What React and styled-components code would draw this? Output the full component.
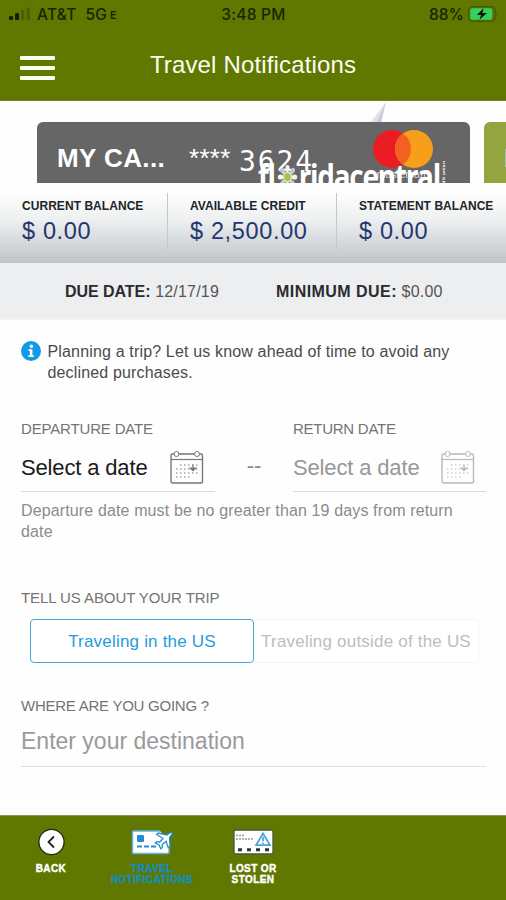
import React from "react";
import styled, { createGlobalStyle } from "styled-components";

const GlobalStyle = createGlobalStyle`
  * { box-sizing: border-box; }
  body { margin: 0; background: #fff; font-family: "Liberation Sans", Arial, sans-serif; }
`;

const Screen = styled.div`
  width: 506px;
  height: 900px;
  display: flex;
  flex-direction: column;
  background: #fefefe;
  overflow: hidden;
`;

const TopBar = styled.header`
  height: 101px;
  flex: none;
  background: #607800;
  border-bottom: 1px solid #6d8222;
`;

const StatusBar = styled.div`
  height: 28px;
  display: grid;
  grid-template-columns: 1fr auto 1fr;
  align-items: center;
  padding: 0 7px 0 8px;
  font-family: Inter, sans-serif;
  font-size: 15.5px;
  font-weight: 500;
  letter-spacing: 0.25px;
  color: #1b2302;
`;

const Carrier = styled.div`
  display: flex;
  align-items: center;
  white-space: pre;
  svg { margin-right: 6px; }
  small { font-size: 11px; font-weight: 600; margin: 2px 0 0 3px; }
`;

const Power = styled.div`
  display: flex;
  justify-content: flex-end;
  align-items: center;
  gap: 4px;
  letter-spacing: 0;
`;

const TitleRow = styled.div`
  height: 73px;
  display: grid;
  grid-template-columns: 35px 1fr 35px;
  align-items: center;
  padding: 0 20px;
`;

const MenuIcon = styled.div`
  display: grid;
  gap: 6.2px;
  margin-top: 7px;
  span { height: 3.6px; border-radius: 1px; background: #fbfdf0; }
`;

const Title = styled.h1`
  margin: 1px 0 0;
  font-size: 24px;
  font-weight: 400;
  letter-spacing: 0.15px;
  text-align: center;
  color: #fbfdf4;
`;

const CardStrip = styled.section`
  height: 82px;
  flex: none;
  position: relative;
  display: flex;
  align-items: flex-end;
  gap: 14px;
  padding-left: 37px;
  overflow: hidden;
`;

const Peak = styled.svg`
  position: absolute;
  left: 370px;
  top: 1px;
`;

const Card = styled.div`
  position: relative;
  flex: none;
  width: ${(p) => p.$width}px;
  height: 61px;
  padding: 21px 0 0 20px;
  display: flex;
  align-items: flex-start;
  border-radius: 6px 6px 0 0;
  background: ${(p) => p.$color};
  color: #fff;
  font-size: 26px;
  line-height: 30px;
  overflow: hidden;
`;

const CardName = styled.strong`
  width: 132px;
  letter-spacing: 0.4px;
`;

const CardMask = styled.span`
  width: 41px;
  letter-spacing: 0.3px;
`;

const CardNumber = styled.span`
  margin: 4px 0 0 9px;
  font-family: "DejaVu Sans Mono", monospace;
  font-size: 28px;
  letter-spacing: 1.9px;
`;

const NetworkMark = styled.div`
  position: absolute;
  left: 335px;
  top: 7px;
  width: 62px;
  text-align: center;
  font-size: 10.5px;
  line-height: 10px;
  color: #dcdcdc;
  svg { display: block; }
`;

const Brand = styled.div`
  position: absolute;
  left: 221px;
  top: 35px;
  display: flex;
  align-items: flex-start;
  font-family: "Open Sans", sans-serif;
  font-size: 34px;
  font-weight: 700;
  line-height: 38px;
  letter-spacing: -1.5px;
  transform: scaleX(0.82);
  transform-origin: left;
  svg { margin: 2px 1px 0 2px; }
`;

const BrandSide = styled.span`
  margin: 4px 0 0 2px;
  writing-mode: vertical-rl;
  transform: rotate(180deg);
  font-size: 5px;
  line-height: 5px;
  letter-spacing: 0;
`;

const Balances = styled.section`
  height: 80px;
  flex: none;
  display: grid;
  grid-template-columns: 168px 169px 1fr;
  padding-top: 10px;
  background: linear-gradient(#fdfdfd 12%, #eef0f1 45%, #bfc4c8 100%);
`;

const Balance = styled.div`
  height: 56px;
  padding: 5.5px 0 0 22px;
  white-space: nowrap;
  border-right: ${(p) => (p.$last ? "0" : "1px solid #c4c8cc")};
`;

const BalanceLabel = styled.div`
  font-size: 12px;
  font-weight: 700;
  line-height: 14px;
  letter-spacing: 0.05px;
  color: #222428;
`;

const Amount = styled.div`
  margin-top: 4px;
  font-size: 23.5px;
  line-height: 28px;
  letter-spacing: 0.65px;
  color: #22366f;
`;

const DueBar = styled.section`
  height: 57px;
  flex: none;
  display: flex;
  align-items: center;
  gap: 57px;
  padding: 2px 0 0 65px;
  background: #edeef0;
  border-bottom: 1px solid #f3f3f4;
  font-size: 16px;
  color: #555;
  white-space: nowrap;
`;

const Due = styled.span`
  letter-spacing: 0.2px;
  b {
    letter-spacing: ${(p) => p.$tracking}px;
    color: #2b2b2d;
  }
`;

const Form = styled.main`
  flex: 1;
  padding: 21px 20px 0 21px;
`;

const Notice = styled.div`
  display: flex;
  gap: 6.5px;
  font-size: 16px;
  line-height: 21px;
  letter-spacing: 0.16px;
  color: #4b4b4b;
  svg { flex: none; }
`;

const FieldLabel = styled.div`
  font-size: 15px;
  line-height: 18px;
  letter-spacing: ${(p) => p.$tracking ?? -0.16}px;
  color: #747474;
  white-space: nowrap;
`;

const Dates = styled.div`
  display: grid;
  grid-template-columns: 194px 78px 193px;
  margin-top: 37px;
`;

const DateValue = styled.div`
  height: 54px;
  padding: 7px 11px 0 0;
  display: flex;
  align-items: center;
  justify-content: space-between;
  border-bottom: 1.5px solid #dcdcdc;
  font-size: 22px;
  letter-spacing: -0.15px;
  color: ${(p) => (p.$muted ? "#979797" : "#1a1a1a")};
  svg { margin-top: -3px; }
`;

const Dash = styled.div`
  align-self: end;
  height: 39px;
  text-align: center;
  font-size: 22px;
  color: #8a8a8a;
`;

const Hint = styled.p`
  width: 450px;
  margin: 8px 0 0;
  font-size: 16px;
  line-height: 21px;
  letter-spacing: 0.13px;
  color: #8b8b8b;
`;

const Section = styled.div`
  margin-top: ${(p) => p.$gap}px;
`;

const Segments = styled.div`
  display: flex;
  width: 449px;
  height: 44px;
  margin: 12px 0 0 9px;
`;

const Segment = styled.button`
  width: ${(p) => (p.$active ? 224 : 225)}px;
  padding: 2px 0 0;
  border: ${(p) => (p.$active ? "1.5px solid #4ba3dc" : "1px solid #f5f5f5")};
  border-left-width: ${(p) => (p.$active ? "1.5px" : "0")};
  border-radius: 4px;
  background: #fff;
  font: 17px "Liberation Sans", Arial, sans-serif;
  letter-spacing: 0.2px;
  color: ${(p) => (p.$active ? "#259bdd" : "#bdbdbd")};
  white-space: nowrap;
`;

const Destination = styled.div`
  height: 52px;
  padding-top: 12px;
  border-bottom: 1.5px solid #dedede;
  font-size: 23px;
  line-height: 28px;
  color: #9a9a9a;
`;

const BottomBar = styled.nav`
  height: 85px;
  flex: none;
  display: flex;
  padding: 12px 0 0;
  background: #607800;
  border-top: 1px solid #869560;
`;

const Tab = styled.div`
  width: 101px;
  display: flex;
  flex-direction: column;
  align-items: center;
  font-size: 10px;
  font-weight: 700;
  line-height: 11px;
  letter-spacing: 0.4px;
  text-align: center;
  color: ${(p) => (p.$active ? "#158db8" : "#fff")};
  -webkit-text-stroke: 0.4px currentColor;
  padding-left: 1px;
  svg { margin-bottom: 7px; }
`;

const Signal = () => (
  <svg width="23" height="14" viewBox="0 0 23 14">
    <rect x="1" y="9" width="4" height="4" rx="1" fill="#161d02" />
    <rect x="7" y="6" width="4" height="7" rx="1" fill="#161d02" />
    <rect x="13" y="3" width="3.5" height="10" rx="1" fill="#4c6004" />
    <rect x="18.5" y="0.5" width="3.5" height="12.5" rx="1" fill="#4c6004" />
  </svg>
);

const Battery = () => (
  <svg width="31" height="16" viewBox="0 0 31 16">
    <rect x="0.7" y="0.7" width="26.6" height="14.6" rx="4" fill="#5a7003" stroke="#465b05" strokeWidth="1.2" />
    <rect x="2.2" y="2.2" width="22" height="11.6" rx="2.2" fill="#35d15e" />
    <path d="M28.8 5.2q2 2.8 0 5.6z" fill="#43570a" />
    <path d="M15.5 2.3 8.8 9h4.3l-1.7 4.8L19 7h-4.5z" fill="#101803" />
  </svg>
);

const Flower = () => (
  <svg width="26" height="32" viewBox="0 0 26 32">
    {[0, 45, 90, 135, 180, 225, 270, 315].map((a) => (
      <ellipse key={a} cx="13" cy="9.5" rx="2.6" ry="3.4" fill={a % 90 ? "#c3c6d8" : "#f3f5e6"} transform={`rotate(${a} 13 18)`} />
    ))}
    <circle cx="13" cy="18" r="5.6" fill="#e8edc9" />
    <circle cx="13" cy="18" r="4" fill="#a9c04a" />
  </svg>
);

const Calendar = ({ color }) => (
  <svg width="34" height="34" viewBox="0 0 34 34" fill="none" stroke={color}>
    <rect x="1" y="4" width="31.5" height="29" rx="1.5" strokeWidth="1.4" />
    <path d="M1 9.5h31.5" strokeWidth="1.2" />
    <circle cx="6.5" cy="4" r="2.5" fill="#fff" />
    <circle cx="27" cy="4" r="2.5" fill="#fff" />
    <path d="M10 15h18M6 19h22M6 23h22M6 27h16" strokeWidth="1.3" strokeDasharray="1.5 2.5" opacity="0.65" />
    <path d="M23 14.5v6M20.3 18l2.7 2.7 2.7-2.7z" strokeWidth="1.2" />
  </svg>
);

const Info = () => (
  <svg width="20" height="20" viewBox="0 0 20 20">
    <circle cx="10" cy="10" r="10" fill="#129ae6" />
    <circle cx="10.4" cy="5.2" r="1.7" fill="#fff" />
    <path d="M7.5 8.3h3.9v6h1.4v1.6H7.4v-1.6h1.5V9.9H7.5z" fill="#fff" />
  </svg>
);

const BackIcon = () => (
  <svg width="27" height="28" viewBox="0 0 27 28">
    <circle cx="13.5" cy="14" r="12.6" fill="#fff" stroke="#20280c" strokeWidth="1.3" />
    <path d="m16 8.5-5.5 5.5 5.5 5.5" fill="none" stroke="#222" strokeWidth="1.8" />
  </svg>
);

const TravelIcon = () => (
  <svg width="42" height="28" viewBox="0 0 42 28">
    <rect x="1.5" y="3" width="36.5" height="22.5" rx="1" fill="#fff" stroke="#62b3df" strokeWidth="1.4" />
    <rect x="6" y="7" width="7" height="7" rx="1" fill="#218fd0" />
    <path d="M6 18.5h19" stroke="#218fd0" strokeWidth="1.8" strokeDasharray="5 2" />
    <path d="M29 2h13v12h-7z" fill="#607800" />
    <path d="m40.5 4-4.7 3-8.5-2-1.5 1.5 6.2 4-3.5 3.7-3-.5-1.2 1.3 3.8 2 1.6 3.7 1.5-1 .1-3.2 3.8-3.1 2.1 6.2 1.8-1-.5-9 2.9-4.2z" fill="#fff" stroke="#218fd0" strokeWidth="1.3" />
  </svg>
);

const LostIcon = () => (
  <svg width="41" height="28" viewBox="0 0 41 28">
    <rect x="1" y="2" width="39" height="24" rx="1.5" fill="#fff" stroke="#4a5538" strokeWidth="1.3" />
    <path d="M3 7.5h8M3 11h18" stroke="#999" strokeWidth="1.3" strokeDasharray="2 1" />
    <path d="M5 21.8h33" stroke="#333" strokeWidth="3" strokeDasharray="4 5" />
    <path d="m30 5.5 7 11.7H23z" fill="#fff" stroke="#4aa5dd" strokeWidth="1.7" />
    <path d="M30 9v4.3M30 14.5v1.5" stroke="#4aa5dd" strokeWidth="1.7" />
  </svg>
);

const balances = [
  ["CURRENT BALANCE", "$ 0.00"],
  ["AVAILABLE CREDIT", "$ 2,500.00"],
  ["STATEMENT BALANCE", "$ 0.00"],
];

export default function App() {
  return (
    <Screen>
      <GlobalStyle />
      <TopBar>
        <StatusBar>
          <Carrier><Signal />AT&amp;T  5G<small>E</small></Carrier>
          <span>3:48 PM</span>
          <Power>88%<Battery /></Power>
        </StatusBar>
        <TitleRow>
          <MenuIcon><span /><span /><span /></MenuIcon>
          <Title>Travel Notifications</Title>
        </TitleRow>
      </TopBar>
      <CardStrip>
        <Peak width="18" height="22" viewBox="0 0 18 22">
          <path d="M16 0 0 21h9z" fill="#e2e6dc" />
          <path d="M16 0 6 21h5z" fill="#cbc9e3" />
        </Peak>
        <Card $width={433} $color="#666">
          <CardName>MY CA...</CardName>
          <CardMask>****</CardMask>
          <CardNumber>3624</CardNumber>
          <NetworkMark>
            <svg width="62" height="40" viewBox="0 0 62 40">
              <circle cx="20" cy="20" r="19" fill="#ec1c24" />
              <circle cx="42" cy="20" r="19" fill="#f79e1b" />
              <path d="M31 4.5a19 19 0 0 1 0 31a19 19 0 0 1 0-31z" fill="#f26122" />
            </svg>
            mastercard
          </NetworkMark>
          <Brand>fl<Flower />ridacentral<BrandSide>credit union</BrandSide></Brand>
        </Card>
        <Card $width={60} $color="#94a43e"><CardName>MY</CardName></Card>
      </CardStrip>
      <Balances>
        {balances.map(([label, amount], i) => (
          <Balance key={label} $last={i === 2}>
            <BalanceLabel>{label}</BalanceLabel>
            <Amount>{amount}</Amount>
          </Balance>
        ))}
      </Balances>
      <DueBar>
        <Due $tracking={-0.05}><b>DUE DATE:</b> 12/17/19</Due>
        <Due $tracking={0.45}><b>MINIMUM DUE:</b> $0.00</Due>
      </DueBar>
      <Form>
        <Notice>
          <Info />
          <span>Planning a trip? Let us know ahead of time to avoid any<br />declined purchases.</span>
        </Notice>
        <Dates>
          <div>
            <FieldLabel>DEPARTURE DATE</FieldLabel>
            <DateValue>Select a date<Calendar color="#777" /></DateValue>
          </div>
          <Dash>--</Dash>
          <div>
            <FieldLabel $tracking={-0.26}>RETURN DATE</FieldLabel>
            <DateValue $muted>Select a date<Calendar color="#b9b9b9" /></DateValue>
          </div>
        </Dates>
        <Hint>Departure date must be no greater than 19 days from return date</Hint>
        <Section $gap={47}>
          <FieldLabel $tracking={-0.08}>TELL US ABOUT YOUR TRIP</FieldLabel>
          <Segments>
            <Segment $active>Traveling in the US</Segment>
            <Segment>Traveling outside of the US</Segment>
          </Segments>
        </Section>
        <Section $gap={34}>
          <FieldLabel $tracking={-0.25}>WHERE ARE YOU GOING ?</FieldLabel>
          <Destination>Enter your destination</Destination>
        </Section>
      </Form>
      <BottomBar>
        <Tab><BackIcon />BACK</Tab>
        <Tab $active><TravelIcon />TRAVEL<br />NOTIFICATIONS</Tab>
        <Tab><LostIcon />LOST OR<br />STOLEN</Tab>
      </BottomBar>
    </Screen>
  );
}
